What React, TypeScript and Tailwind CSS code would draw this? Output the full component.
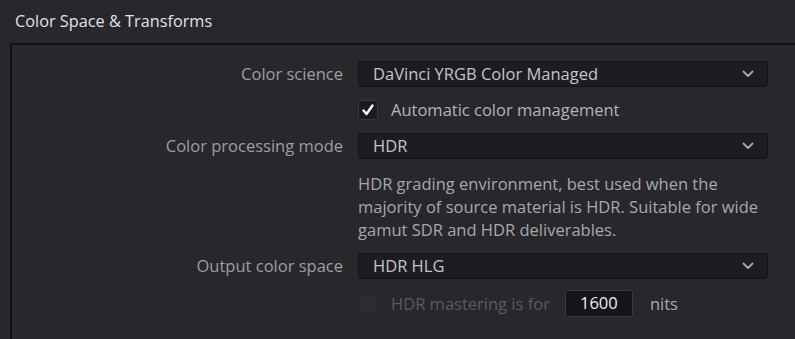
import React from 'react';

const font = { fontFamily: '"Open Sans", "Noto Sans", sans-serif' };

function Chevron() {
  return (
    <svg width="12" height="8" viewBox="0 0 12 8" className="text-[#a9a9ad]">
      <path d="M1.5 1.5 L6 6 L10.5 1.5" fill="none" stroke="currentColor" strokeWidth="1.8" strokeLinecap="round" strokeLinejoin="round" />
    </svg>
  );
}

function Select({ value }: { value: string }) {
  return (
    <div className="h-[26px] w-[410px] flex items-center justify-between pl-[14px] pr-[13px] bg-[#1d1c21] border border-[#141317] rounded-[3px] text-[16.5px] leading-[20px] text-[#c4c4c8]">
      <span>{value}</span>
      <Chevron />
    </div>
  );
}

function Check({ checked, disabled }: { checked?: boolean; disabled?: boolean }) {
  return (
    <div
      className={`w-[20px] h-[20px] rounded-[3px] border flex items-center justify-center ${
        disabled ? 'bg-[#2c2b31] border-[#232227]' : 'bg-[#1b1a1f] border-[#3a393f]'
      }`}
    >
      {checked && (
        <svg width="14" height="14" viewBox="0 0 14 14">
          <path d="M2.5 7.5 L5.5 11 L11.5 2.5" fill="none" stroke="#ffffff" strokeWidth="2.4" strokeLinecap="round" strokeLinejoin="round" />
        </svg>
      )}
    </div>
  );
}

function Row({ label, children }: { label?: string; children: React.ReactNode }) {
  return (
    <div className="flex items-center">
      <div className="w-[346px] pr-[15px] text-right text-[16.5px] leading-[20px] text-[#9e9ea2] shrink-0">{label}</div>
      <div className="flex items-center">{children}</div>
    </div>
  );
}

export default function App() {
  return (
    <div className="w-[795px] h-[339px] overflow-hidden bg-[#28272d]" style={font}>
      <div className="h-[43px] pl-[15px] pt-[9px] text-[16.3px] leading-[24px] text-[#e2e2e4]">Color Space &amp; Transforms</div>
      <div className="ml-[10px] w-[800px] h-[300px] border-l-2 border-t-2 border-[#111014] bg-[#28272c] pt-[16px] flex flex-col">
        <Row label="Color science">
          <Select value="DaVinci YRGB Color Managed" />
        </Row>
        <div className="mt-[13px]">
          <Row>
            <Check checked />
            <span className="ml-[13px] text-[16.5px] leading-[20px] text-[#b4b4b8]">Automatic color management</span>
          </Row>
        </div>
        <div className="mt-[13px]">
          <Row label="Color processing mode">
            <Select value="HDR" />
          </Row>
        </div>
        <div className="mt-[13px] flex">
          <div className="w-[346px] shrink-0" />
          <p className="w-[410px] text-[16.5px] leading-[23px] text-[#a8a8ac]">
            HDR grading environment, best used when the majority of source material is HDR. Suitable for wide gamut SDR and HDR deliverables.
          </p>
        </div>
        <div className="mt-[12px]">
          <Row label="Output color space">
            <Select value="HDR HLG" />
          </Row>
        </div>
        <div className="mt-[11px]">
          <Row>
            <Check disabled />
            <span className="ml-[13px] text-[16.5px] leading-[20px] text-[#5b5a60]">HDR mastering is for</span>
            <div className="ml-[15px] w-[68px] h-[27px] flex items-center justify-center bg-[#151418] border border-[#3b3a40] rounded-[2px] text-[16.5px] text-[#ececee]">
              1600
            </div>
            <span className="ml-[17px] text-[16.5px] leading-[20px] text-[#aaaaae]">nits</span>
          </Row>
        </div>
      </div>
    </div>
  );
}
